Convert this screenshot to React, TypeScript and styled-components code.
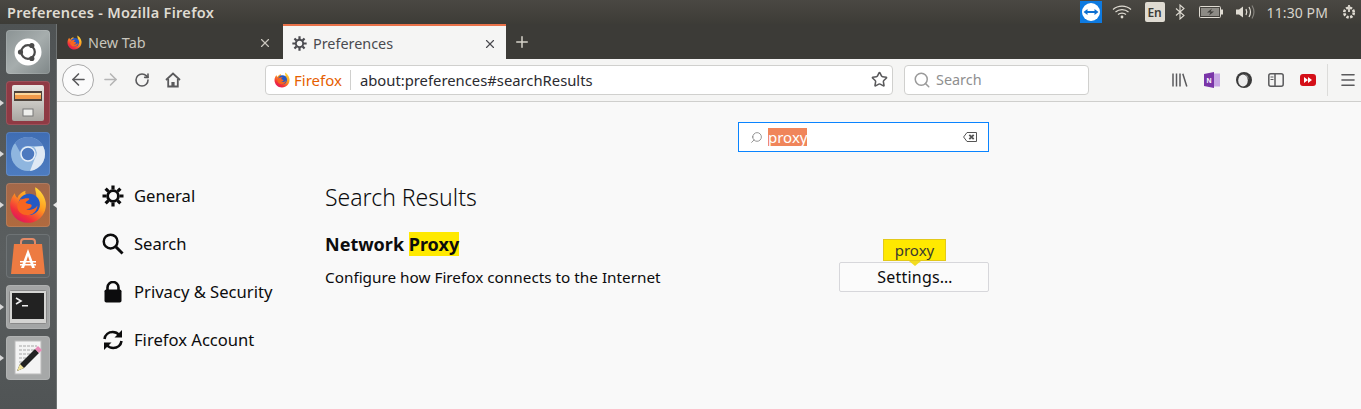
import React from "react"
import styled, { createGlobalStyle } from "styled-components"
import { Search as SearchIcon, Plus, X, Star, RotateCw, ArrowLeft, ArrowRight, Menu } from "lucide-react"

const Global = createGlobalStyle`
	html, body { margin: 0; padding: 0; height: 100%; background: #f9f9f9; overflow: hidden; }
	body { font-family: "Noto Sans", "Open Sans", sans-serif; color: #0c0c0d; }
	#root { height: 100%; }
`

const Screen = styled.div`
	width: 1361px;
	height: 409px;
	display: flex;
	flex-direction: column;
	overflow: hidden;
`

const PanelBar = styled.div`
	height: 24px;
	flex: none;
	display: flex;
	align-items: center;
	justify-content: space-between;
	background: linear-gradient(#4a4843, #3d3c37);
	padding: 0 4px 0 7px;
`

const WindowTitle = styled.div`
	color: #dfdbd2;
	font-size: 14.5px;
	font-weight: 600;
	letter-spacing: .3px;
`

const Indicators = styled.div`
	display: flex;
	align-items: center;
	color: #dfdbd2;
`

const Gap = styled.span<{ $w: number }>`
	width: ${p => p.$w}px;
`

const Clock = styled.span`
	font-size: 14px;
	color: #d8d4cb;
	margin: 0 13px 0 12px;
	letter-spacing: .1px;
`

const Desktop = styled.div`
	flex: 1;
	display: flex;
	min-height: 0;
`

const Launcher = styled.div`
	width: 57px;
	flex: none;
	display: flex;
	flex-direction: column;
	gap: 7px;
	padding: 6px 0 0 6px;
	box-sizing: border-box;
	background: linear-gradient(#4f5354, #5a5e5f 60%, #505455);
	border-right: 1px solid #6f7373;
`

const Tile = styled.div<{ $bg: string; $pip?: boolean }>`
	width: 44px;
	height: 44px;
	flex: none;
	border-radius: 4px;
	background: ${p => p.$bg};
	box-shadow: inset 0 0 0 1px rgba(255, 255, 255, .12);
	position: relative;
	display: flex;
	align-items: center;
	justify-content: center;
	&::before {
		content: ${p => (p.$pip ? '""' : "none")};
		position: absolute;
		left: -6px;
		top: 19px;
		border-left: 4px solid #d8d8d8;
		border-top: 3px solid transparent;
		border-bottom: 3px solid transparent;
	}
`

const ActiveArrow = styled.div`
	position: absolute;
	right: -7px;
	top: 19px;
	border-right: 4px solid #e8e8e8;
	border-top: 3px solid transparent;
	border-bottom: 3px solid transparent;
`

const Browser = styled.div`
	flex: 1;
	min-width: 0;
	display: flex;
	flex-direction: column;
`

const TabStrip = styled.div`
	height: 35px;
	flex: none;
	display: flex;
	background: #3c3b37;
`

const Tab = styled.div<{ $active?: boolean }>`
	width: ${p => (p.$active ? 223 : 226)}px;
	box-sizing: border-box;
	display: flex;
	align-items: center;
	gap: 6px;
	padding: ${p => (p.$active ? "2px 9px 0 9px" : "2px 11px 0 10px")};
	font-size: 14.4px;
	color: ${p => (p.$active ? "#4a4a4f" : "#c9c6bd")};
	background: ${p => (p.$active ? "#f5f5f4" : "transparent")};
	border-top: ${p => (p.$active ? "2px solid #e9724a" : "none")};
`

const TabLabel = styled.span`
	flex: 1;
`

const NewTab = styled.div`
	width: 32px;
	display: flex;
	align-items: center;
	justify-content: center;
	color: #d6d3ca;
`

const Toolbar = styled.div`
	height: 43px;
	flex: none;
	box-sizing: border-box;
	display: flex;
	align-items: center;
	background: #f5f5f4;
	border-bottom: 1px solid #cfcfcd;
	padding: 0 0 1px 5px;
	color: #5a5a5c;
`

const BackButton = styled.div`
	width: 32px;
	height: 32px;
	box-sizing: border-box;
	border: 1px solid #a9a9a9;
	border-radius: 50%;
	background: #fbfbfb;
	display: flex;
	align-items: center;
	justify-content: center;
`

const ToolButton = styled.div<{ $w: number; $muted?: boolean }>`
	width: ${p => p.$w}px;
	display: flex;
	justify-content: center;
	color: ${p => (p.$muted ? "#b5b5b5" : "#5a5a5c")};
`

const UrlBar = styled.div`
	width: 628px;
	height: 30px;
	box-sizing: border-box;
	margin-left: 76px;
	display: flex;
	align-items: center;
	background: #fff;
	border: 1px solid #d0d0ce;
	border-radius: 4px;
	padding: 0 4px 0 8px;
	font-size: 14.8px;
	color: #2b2b30;
`

const Identity = styled.span`
	display: flex;
	align-items: center;
	gap: 4px;
	color: #e66000;
	font-size: 15px;
	padding-right: 8px;
	margin-right: 9px;
	border-right: 1px solid #d0d0ce;
	height: 20px;
`

const UrlText = styled.span`
	flex: 1;
`

const SearchBar = styled.div`
	width: 185px;
	height: 30px;
	box-sizing: border-box;
	margin-left: 11px;
	display: flex;
	align-items: center;
	gap: 5px;
	padding-left: 8px;
	background: #fff;
	border: 1px solid #d0d0ce;
	border-radius: 4px;
	color: #8f8f8f;
	font-size: 14.4px;
`

const ToolIcons = styled.div`
	margin-left: 75px;
	display: flex;
	align-items: center;
	height: 32px;
`

const ToolGlyph = styled.span`
	width: 32px;
	display: flex;
	justify-content: center;
`

const MenuButton = styled.div`
	margin-left: 3px;
	padding-left: 11px;
	height: 32px;
	display: flex;
	align-items: center;
	border-left: 1px solid #dcdcda;
`

const Page = styled.div`
	flex: 1;
	min-height: 0;
	background: #f9f9f9;
	display: grid;
	grid-template-columns: 223px 664px;
	grid-template-rows: 50px 1fr;
	padding: 20px 0 0 45px;
`

const FindBox = styled.div`
	grid-column: 2;
	justify-self: end;
	width: 251px;
	height: 30px;
	box-sizing: border-box;
	display: flex;
	align-items: center;
	background: #fff;
	border: 1px solid #0a84ff;
	padding: 0 11px 0 11px;
	font-size: 15px;
	color: #fff;
`

const Selected = styled.span`
	background: #f0855a;
	margin-left: 5px;
	line-height: 18px;
	flex: 0 0 auto;
`

const Spacer = styled.span`
	flex: 1;
`

const Nav = styled.nav`
	display: flex;
	flex-direction: column;
`

const NavItem = styled.div`
	height: 48px;
	display: flex;
	align-items: center;
	gap: 10px;
	font-size: 16.6px;
	color: #0c0c0d;
`

const NavGlyph = styled.span`
	width: 22px;
	height: 24px;
	display: flex;
	align-items: center;
	justify-content: center;
`

const NavLabel = styled.span`
	margin-bottom: 2px;
`

const Main = styled.main`
	display: flex;
	flex-direction: column;
`

const Heading = styled.h1`
	margin: 8px 0 0;
	font-size: 23px;
	font-weight: 300;
	line-height: 34px;
	color: #0c0c0d;
`

const GroupTitle = styled.h2`
	margin: 18px 0 0;
	font-size: 18px;
	font-weight: 700;
	line-height: 24px;
`

const Mark = styled.mark`
	background: #ffe900;
	color: inherit;
`

const SettingRow = styled.div`
	display: flex;
	align-items: center;
	justify-content: space-between;
	margin-top: 6px;
	font-size: 15.3px;
`

const SettingsButton = styled.div`
	position: relative;
	width: 150px;
	height: 30px;
	box-sizing: border-box;
	display: flex;
	align-items: center;
	justify-content: center;
	background: #fbfbfb;
	border: 1px solid #d7d7db;
	border-radius: 2px;
	font-size: 16px;
	letter-spacing: .2px;
	padding-left: 2px;
`

const Tooltip = styled.div`
	position: absolute;
	left: 43px;
	top: -24px;
	width: 63px;
	height: 22px;
	box-sizing: border-box;
	display: flex;
	align-items: center;
	justify-content: center;
	background: #ffe900;
	border: 1px solid #e3c91a;
	color: #3a3a30;
	font-size: 15px;
	letter-spacing: 0;
	&::after {
		content: "";
		position: absolute;
		left: 25px;
		bottom: -6px;
		border-top: 5px solid #f2dc20;
		border-left: 6px solid transparent;
		border-right: 6px solid transparent;
	}
`

const LangBadge = styled.span`
	width: 20px;
	height: 20px;
	border-radius: 2px;
	background: #dfdbd2;
	color: #3c3b37;
	font-size: 12px;
	font-weight: 600;
	display: flex;
	align-items: center;
	justify-content: center;
	margin: 0 10px 0 13px;
`

function FirefoxLogo({ size, id }: { size: number; id: string }) {
	return <svg width={size} height={size} viewBox="0 0 32 32">
		<defs>
			<linearGradient id={id} x1="0.8" y1="0" x2="0.15" y2="1">
				<stop offset="0" stopColor="#ffdc3c" />
				<stop offset=".4" stopColor="#ff9a1f" />
				<stop offset=".75" stopColor="#f2313a" />
				<stop offset="1" stopColor="#d80f6c" />
			</linearGradient>
		</defs>
		<path d="M22 1c4 2 8 7 9 13 1 9-6 17-15 17C7 31 1 24 1 16c0-4 2-8 4-10 0 2 1 3 2 4 1-3 4-5 7-6-1 2 0 3 2 4 3 1 7 2 7 0 0-2-1-4-1-7z" fill={`url(#${id})`} />
		<circle cx="17" cy="15.5" r="9" fill="#2459c4" />
		<path d="M10.5 11.5c1.5-1 4.5-1.5 6.5-1 .5 1.5-2.5 2-3 3.5 1.5 1.5 4 .5 5 2 .5 2-2 3.5-4.5 3.5 3 1.500 7 .5 9.500-3-.5 5.500-5 8.500-9.500 8-4.500-.5-7.500-3.500-7.500-7.500 0-2.500 1.500-5 3.500-6.500z" fill="#f8651f" />
	</svg>
}

function TeamViewerIcon() {
	return <svg width="22" height="22" viewBox="0 0 22 22">
		<rect width="22" height="22" fill="#0e7ae0" />
		<circle cx="11" cy="11" r="9" fill="#fff" />
		<path d="M3.500 11l4-3v2h7V8l4 3-4 3v-2h-7v2z" fill="#0e6fd0" />
	</svg>
}

function WifiIcon() {
	return <svg width="20" height="16" viewBox="0 0 20 16" fill="none" stroke="#dfdbd2" strokeWidth="1.2">
		<path d="M1 5.500c5-4.600 13-4.600 18 0" />
		<path d="M3.500 8c3.600-3.200 9.400-3.200 13 0" />
		<path d="M6 10.500c2.200-1.900 5.800-1.900 8 0" />
		<circle cx="10" cy="13" r="1.400" fill="#dfdbd2" stroke="none" />
	</svg>
}

function BluetoothIcon() {
	return <svg width="10" height="16" viewBox="0 0 10 16" fill="none" stroke="#dfdbd2" strokeWidth="1.1">
		<path d="M1 4.500l8 7L5 15V1l4 3.500-8 7" />
	</svg>
}

function BatteryIcon() {
	return <svg width="24" height="12" viewBox="0 0 24 12">
		<rect x=".5" y=".5" width="21" height="11" rx="1" fill="none" stroke="#dfdbd2" />
		<rect x="2" y="2" width="18" height="8" fill="#8d8b85" />
		<rect x="22" y="3.500" width="2" height="5" fill="#dfdbd2" />
		<path d="M13 2.500L8 6.500h3.500L10 9.500l5-4h-3.500z" fill="#3c3b37" />
	</svg>
}

function VolumeIcon() {
	return <svg width="20" height="16" viewBox="0 0 20 16" fill="none">
		<path d="M1 5.500h3L8 2.500v11l-4-3H1z" fill="#dfdbd2" />
		<path d="M11 5c1 2 1 4 0 6" stroke="#dfdbd2" strokeWidth="1.300" />
		<path d="M14 3c1.800 3 1.800 7 0 10" stroke="#dfdbd2" strokeWidth="1.200" />
		<path d="M17 1.500c2.400 4 2.400 9 0 13" stroke="#85837d" strokeWidth="1.200" />
	</svg>
}

function SessionIcon() {
	return <svg width="16" height="16" viewBox="0 0 16 16" fill="none" stroke="#dfdbd2">
		<circle cx="8" cy="8.500" r="4.800" strokeWidth="2.600" strokeDasharray="2.400 1.400" />
		<path d="M8 1v7" strokeWidth="1.800" />
	</svg>
}

function HomeIcon() {
	return <svg width="16" height="16" viewBox="0 0 16 16" fill="none" stroke="currentColor" strokeWidth="1.800">
		<path d="M1 8l7-6.500L15 8" />
		<path d="M3.200 7v7.500h9.600V7" />
		<rect x="6.400" y="10" width="3.200" height="4.500" fill="currentColor" stroke="none" />
	</svg>
}

function LibraryIcon() {
	return <svg width="16" height="14" viewBox="0 0 16 14" fill="none" stroke="#5a5a5c" strokeWidth="1.500">
		<path d="M1 .5v13M4.500 .5v13M8 .5v13M10.800 .7l4 12.800" />
	</svg>
}

function OneNoteIcon() {
	return <svg width="16" height="16" viewBox="0 0 16 16">
		<rect x="7" y="1.500" width="9" height="13" fill="#c8a8e4" />
		<path d="M0 2l10-2v16L0 14z" fill="#7a35a8" />
		<text x="5" y="10.500" fontSize="7" fontWeight="700" fill="#fff" textAnchor="middle" fontFamily="Liberation Sans">N</text>
	</svg>
}

function ShieldIcon() {
	return <svg width="16" height="16" viewBox="0 0 16 16">
		<circle cx="8" cy="8" r="8" fill="#3a3a3a" />
		<ellipse cx="7" cy="8.500" rx="4.800" ry="6" fill="#ececec" />
		<path d="M8 1.500c3.500 1 5 3.500 4.500 6L9.500 2.500z" fill="#8a8a8a" />
	</svg>
}

function SidebarIcon() {
	return <svg width="16" height="14" viewBox="0 0 16 14" fill="none" stroke="#5a5a5c" strokeWidth="1.500">
		<rect x=".8" y=".8" width="14.400" height="12.400" rx="2" />
		<path d="M7 1v12" />
		<path d="M2.500 4h3M2.500 6.500h3" strokeWidth="1" />
	</svg>
}

function VideoIcon() {
	return <svg width="16" height="12" viewBox="0 0 16 12">
		<rect width="16" height="12" rx="3" fill="#d40f18" />
		<path d="M4 3l4 3-4 3zM8 3l4 3-4 3z" fill="#fff" />
	</svg>
}

function BackspaceIcon() {
	return <svg width="14" height="10" viewBox="0 0 14 10" fill="none" stroke="#555" strokeWidth="1">
		<path d="M4 .5h9.500v9H4L.6 5z" />
		<path d="M6.300 2.800l4.400 4.400M10.700 2.800L6.300 7.200" strokeWidth="1.800" />
	</svg>
}

function GearIcon({ size, color }: { size: number; color: string }) {
	return <svg width={size} height={size} viewBox="0 0 22 22" fill="none" stroke={color}>
		<circle cx="11" cy="11" r="5.400" strokeWidth="2.800" />
		<path d="M11 0.500v4M11 17.500v4M0.500 11h4M17.500 11h4M3.600 3.600l2.800 2.800M15.600 15.600l2.800 2.800M18.400 3.600l-2.800 2.800M6.400 15.600l-2.800 2.800" strokeWidth="3.200" />
	</svg>
}

function MagnifierIcon() {
	return <svg width="23" height="24" viewBox="0 0 23 24" fill="none" stroke="#0c0c0d">
		<circle cx="9" cy="9.500" r="7.200" strokeWidth="2.600" />
		<path d="M14.500 15l7 7" strokeWidth="3" />
	</svg>
}

function LockIcon() {
	return <svg width="20" height="22" viewBox="0 0 20 22">
		<path d="M4.500 9V6.500a5.500 5.500 0 0 1 11 0V9" fill="none" stroke="#0c0c0d" strokeWidth="2.600" />
		<rect x="1.500" y="8.500" width="17" height="13" rx="1.800" fill="#0c0c0d" />
	</svg>
}

function SyncIcon() {
	return <svg width="22" height="22" viewBox="0 0 22 22" fill="none" stroke="#0c0c0d" strokeWidth="2.600">
		<path d="M2.500 10c.6-4.200 4-7 8.300-7 2.800 0 4.800 1.100 6.400 3" />
		<path d="M19.500 12c-.6 4.200-4 7-8.300 7-2.800 0-4.800-1.100-6.400-3" />
		<path d="M20 1v7.500h-7.500z" fill="#0c0c0d" stroke="none" />
		<path d="M2 21v-7.500h7.500z" fill="#0c0c0d" stroke="none" />
	</svg>
}

function UbuntuLogo() {
	return <svg width="28" height="28" viewBox="0 0 28 28">
		<circle cx="14" cy="14" r="13.500" fill="#fff" />
		<circle cx="14" cy="14" r="6.800" fill="none" stroke="#4a4a4a" strokeWidth="2.200" />
		<circle cx="6.500" cy="14" r="2.600" fill="#4a4a4a" />
		<circle cx="17.800" cy="7.500" r="2.600" fill="#4a4a4a" />
		<circle cx="17.800" cy="20.500" r="2.600" fill="#4a4a4a" />
	</svg>
}

function FilesIcon() {
	return <svg width="34" height="38" viewBox="0 0 34 38">
		<defs>
			<linearGradient id="cab" x1="0" y1="0" x2="0" y2="1">
				<stop offset="0" stopColor="#e8e6e2" />
				<stop offset="1" stopColor="#a8a6a1" />
			</linearGradient>
		</defs>
		<rect x="1" y="1" width="32" height="36" rx="2" fill="url(#cab)" />
		<rect x="3" y="7" width="28" height="10" fill="#4e433b" />
		<rect x="4" y="9" width="26" height="6" fill="#f09a4a" />
		<rect x="4" y="9" width="26" height="2" fill="#fbd69a" />
		<rect x="12" y="25" width="10" height="7" fill="#efefec" stroke="#777" />
	</svg>
}

function ChromiumIcon() {
	return <svg width="36" height="36" viewBox="0 0 36 36">
		<circle cx="18" cy="18" r="17" fill="#8fb6df" />
		<path d="M5 7a17 17 0 0 1 28 3H18a8 8 0 0 0-8 6z" fill="#5c86c6" />
		<path d="M33 10a17 17 0 0 1-13 25l5-13a8 8 0 0 0-1-11z" fill="#dfe9f4" />
		<circle cx="18" cy="18" r="7" fill="#4d79bf" stroke="#e6eef8" strokeWidth="1.500" />
	</svg>
}

function SoftwareIcon() {
	return <svg width="36" height="36" viewBox="0 0 36 36">
		<path d="M11 7V4a3 3 0 0 1 3-3h8a3 3 0 0 1 3 3v3" fill="none" stroke="#e58a66" strokeWidth="2" />
		<path d="M4 6h28l3 30H1z" fill="#ed7b42" />
		<path d="M18 11l7 19h-3l-4-12-4 12h-3z" fill="#fff" />
		<rect x="10" y="23" width="16" height="1.500" fill="#fff" />
		<rect x="10" y="26" width="16" height="1.500" fill="#fff" />
	</svg>
}

function TerminalIcon() {
	return <svg width="38" height="34" viewBox="0 0 38 34">
		<rect x=".5" y=".5" width="37" height="33" rx="1" fill="#d4d4d2" stroke="#8a8a8a" />
		<rect x="3" y="3" width="32" height="26" fill="#222" />
		<path d="M7 8l5 3-5 3" fill="none" stroke="#eee" strokeWidth="1.600" />
		<rect x="13" y="15" width="6" height="1.500" fill="#eee" />
	</svg>
}

function EditorIcon() {
	return <svg width="34" height="36" viewBox="0 0 34 36">
		<rect x="4" y="1" width="26" height="33" fill="#f4f4f4" stroke="#bbb" />
		<path d="M8 6h18M8 10h18M8 14h16M8 18h13M8 22h10M8 26h8" stroke="#a6a6a6" strokeWidth="1" strokeDasharray="3 1" />
		<path d="M6 31l3-7 15-15 4 4-15 15z" fill="#222" />
		<path d="M24 9l3-3 4 4-3 3z" fill="#e98ab8" />
		<path d="M6 31l3-7 4 4z" fill="#f2e49a" />
	</svg>
}

export default function App() {
	return <Screen>
		<Global />
		<PanelBar>
			<WindowTitle>Preferences - Mozilla Firefox</WindowTitle>
			<Indicators>
				<TeamViewerIcon />
				<Gap $w={10} />
				<WifiIcon />
				<LangBadge>En</LangBadge>
				<BluetoothIcon />
				<Gap $w={14} />
				<BatteryIcon />
				<Gap $w={12} />
				<VolumeIcon />
				<Clock>11:30 PM</Clock>
				<SessionIcon />
			</Indicators>
		</PanelBar>
		<Desktop>
			<Launcher>
				<Tile $bg="linear-gradient(135deg,#8b9394,#a6adad 50%,#7f8788)"><UbuntuLogo /></Tile>
				<Tile $bg="#8f3a44" $pip><FilesIcon /></Tile>
				<Tile $bg="linear-gradient(#3f6db3,#4d7cc0)" $pip><ChromiumIcon /></Tile>
				<Tile $bg="linear-gradient(#a2684a,#b06a3e)" $pip>
					<FirefoxLogo size={38} id="ff-dock" />
					<ActiveArrow />
				</Tile>
				<Tile $bg="#5b6062"><SoftwareIcon /></Tile>
				<Tile $bg="#a3a5a5" $pip><TerminalIcon /></Tile>
				<Tile $bg="#a6a8a8" $pip><EditorIcon /></Tile>
			</Launcher>
			<Browser>
				<TabStrip>
					<Tab>
						<FirefoxLogo size={15} id="ff-tab" />
						<TabLabel>New Tab</TabLabel>
						<X size={14} />
					</Tab>
					<Tab $active>
						<GearIcon size={15} color="#4a4a4f" />
						<TabLabel>Preferences</TabLabel>
						<X size={14} />
					</Tab>
					<NewTab><Plus size={18} /></NewTab>
				</TabStrip>
				<Toolbar>
					<BackButton><ArrowLeft size={19} /></BackButton>
					<ToolButton $w={33} $muted><ArrowRight size={19} /></ToolButton>
					<ToolButton $w={30}><RotateCw size={16} strokeWidth={2.4} /></ToolButton>
					<ToolButton $w={32}><HomeIcon /></ToolButton>
					<UrlBar>
						<Identity><FirefoxLogo size={16} id="ff-url" />Firefox</Identity>
						<UrlText>about:preferences#searchResults</UrlText>
						<Star size={17} strokeWidth={2.2} color="#5a5a5c" />
					</UrlBar>
					<SearchBar><SearchIcon size={18} color="#9a9a9a" />Search</SearchBar>
					<ToolIcons>
						<ToolGlyph><LibraryIcon /></ToolGlyph>
						<ToolGlyph><OneNoteIcon /></ToolGlyph>
						<ToolGlyph><ShieldIcon /></ToolGlyph>
						<ToolGlyph><SidebarIcon /></ToolGlyph>
						<ToolGlyph><VideoIcon /></ToolGlyph>
						<MenuButton><Menu size={18} strokeWidth={2.2} /></MenuButton>
					</ToolIcons>
				</Toolbar>
				<Page>
					<FindBox>
						<SearchIcon size={13} color="#777" strokeWidth={1.4} style={{ transform: "scaleX(-1)" }} />
						<Selected>proxy</Selected>
						<Spacer />
						<BackspaceIcon />
					</FindBox>
					<Nav>
						<NavItem><NavGlyph><GearIcon size={22} color="#0c0c0d" /></NavGlyph><NavLabel>General</NavLabel></NavItem>
						<NavItem><NavGlyph><MagnifierIcon /></NavGlyph><NavLabel>Search</NavLabel></NavItem>
						<NavItem><NavGlyph><LockIcon /></NavGlyph><NavLabel>Privacy &amp; Security</NavLabel></NavItem>
						<NavItem><NavGlyph><SyncIcon /></NavGlyph><NavLabel>Firefox Account</NavLabel></NavItem>
					</Nav>
					<Main>
						<Heading>Search Results</Heading>
						<GroupTitle>Network <Mark>Proxy</Mark></GroupTitle>
						<SettingRow>
							Configure how Firefox connects to the Internet
							<SettingsButton>
								Settings…
								<Tooltip>proxy</Tooltip>
							</SettingsButton>
						</SettingRow>
					</Main>
				</Page>
			</Browser>
		</Desktop>
	</Screen>
}
